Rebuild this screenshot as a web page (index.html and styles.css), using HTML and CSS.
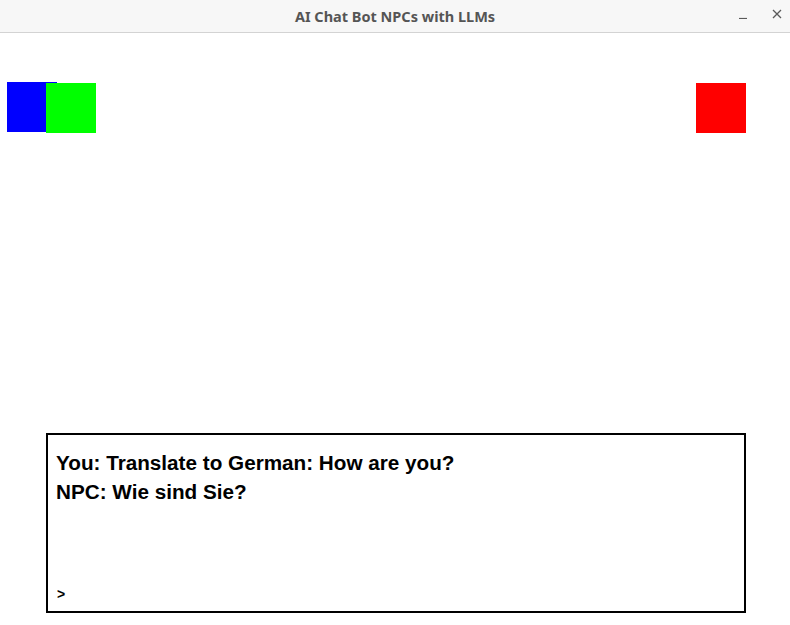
FILE: index.html
```html
<!DOCTYPE html>
<html>
<head>
<meta charset="utf-8">
<link rel="stylesheet" href="styles.css">
</head>
<body>
<div class="window">
  <div class="titlebar">
    <span class="title">AI Chat Bot NPCs with LLMs</span>
    <div class="controls">
      <span class="ctl min"><svg width="10" height="10" viewBox="0 0 10 10"><path d="M1 9.5H9" stroke="#5a5a5a" stroke-width="1.2"/></svg></span>
      <span class="ctl close"><svg width="10" height="10" viewBox="0 0 10 10"><path d="M1 1L9 9M9 1L1 9" stroke="#5a5a5a" stroke-width="1.3"/></svg></span>
    </div>
  </div>
  <div class="canvas">
    <div class="npc blue"></div>
    <div class="npc green"></div>
    <div class="npc red"></div>
    <div class="chat">
      <div class="line">You: Translate to German: How are you?</div>
      <div class="line">NPC: Wie sind Sie?</div>
      <div class="prompt">&gt;</div>
    </div>
  </div>
</div>
</body>
</html>
```
FILE: styles.css
```css
html, body {
  margin: 0;
  padding: 0;
  background: #ffffff;
}
.window {
  width: 790px;
  height: 625px;
  display: flex;
  flex-direction: column;
  overflow: hidden;
}
.titlebar {
  height: 32px;
  flex: none;
  background: #f7f7f7;
  border-bottom: 1px solid #d3d3d3;
  display: flex;
  align-items: center;
  justify-content: center;
  position: relative;
}
.title {
  font-family: "Noto Sans", "DejaVu Sans", sans-serif;
  font-weight: bold;
  font-size: 14.5px;
  color: #555555;
}
.controls {
  position: absolute;
  right: 8px;
  top: 9px;
  display: flex;
  gap: 24px;
}
.ctl {
  width: 10px;
  height: 10px;
  display: block;
}
.ctl svg { display: block; }
.canvas {
  flex: 1;
  position: relative;
  background: #ffffff;
  padding: 400px 0 0 46px;
}
.npc {
  position: absolute;
  width: 50px;
  height: 50px;
}
.blue { left: 7px; top: 49px; background: #0000ff; }
.green { left: 46px; top: 50px; background: #00ff00; }
.red { left: 696px; top: 50px; background: #ff0000; }
.chat {
  width: 696px;
  height: 176px;
  border: 2px solid #000000;
  background: #ffffff;
  box-sizing: content-box;
  position: relative;
  padding: 0;
  font-family: "Liberation Sans", Arial, sans-serif;
  font-weight: bold;
  font-size: 20.7px;
  color: #000000;
  display: flex;
  flex-direction: column;
}
.line {
  margin-left: 8px;
  height: 29px;
  line-height: 29px;
  white-space: nowrap;
}
.line:first-child { margin-top: 13px; }
.prompt {
  margin-left: 9px;
  margin-top: auto;
  margin-bottom: 7px;
  line-height: 20px;
  font-size: 14px;
}
```
